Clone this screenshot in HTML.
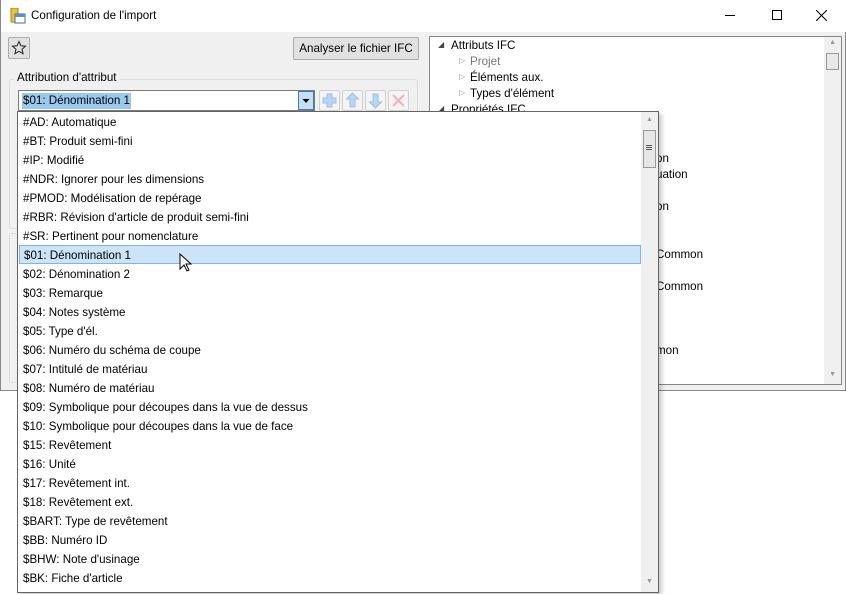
<!DOCTYPE html>
<html><head><meta charset="utf-8"><style>
*{margin:0;padding:0;box-sizing:border-box}
body{width:846px;height:594px;background:#fff;position:relative;overflow:hidden;font-family:"Segoe UI","Liberation Sans",sans-serif;font-size:11.6px;color:#000}
.win{position:absolute;left:0;top:0;width:846px;height:391px;background:#f0f0f0;border:1px solid #888;border-top:none}
.title{position:absolute;left:0;top:0;width:845px;height:32px;background:#fff}
.title span{position:absolute;left:30px;top:9px;font-size:11.6px}
.abs{position:absolute}
.btn{position:absolute;background:#e1e1e1;border:1px solid #adadad;border-radius:2px}
.tree{position:absolute;left:428px;top:36px;width:413px;height:349px;background:#fff;border:1px solid #828790}
.tree div{position:absolute;white-space:nowrap}
.list{position:absolute;left:17px;top:111px;width:642px;height:482px;background:#fff;border:1px solid #646464;box-shadow:3px 3px 4px rgba(0,0,0,.2)}
.list .r{position:absolute;left:1px;width:622px;height:19px;line-height:21px;padding-left:4px;white-space:nowrap}
.sel{background:#cce4f7;border:1px solid #7eb4ea;line-height:19px!important}
.sb{position:absolute;right:0;top:0;width:17px;height:480px;background:#f0f0f0}
</style></head><body>
<div class="win">
<div class="title">
<svg class="abs" style="left:9px;top:8px" width="16" height="16"><rect x="1" y="0" width="7" height="14" fill="#f2c12e" stroke="#b08010"/><rect x="5" y="6" width="10" height="9" fill="#fff" stroke="#3a6ea5"/><rect x="5" y="6" width="10" height="3" fill="#5b8fd0"/></svg>
<span>Configuration de l'import</span>
<div class="abs" style="left:724px;top:15px;width:10px;height:1px;background:#000"></div>
<div class="abs" style="left:771px;top:10px;width:10px;height:10px;border:1px solid #000"></div>
<svg class="abs" style="left:815px;top:10px" width="11" height="11"><path d="M0 0L11 11M11 0L0 11" stroke="#000"/></svg>
</div>
<div class="btn" style="left:7px;top:37px;width:22px;height:22px"><svg width="20" height="20"><path d="M10 3.5l1.9 4.3 4.6.4-3.5 3 1.1 4.5-4.1-2.4-4.1 2.4 1.1-4.5-3.5-3 4.6-.4z" fill="none" stroke="#222"/></svg></div>
<div class="btn" style="left:292px;top:37px;width:126px;height:23px;line-height:21px;text-align:center">Analyser le fichier IFC</div>
<div class="abs" style="left:8px;top:79px;width:409px;height:150px;border:1px solid #dcdcdc;border-radius:3px"></div>
<div class="abs" style="left:13px;top:71px;background:#f0f0f0;padding:0 3px">Attribution d'attribut</div>
<div class="abs" style="left:8px;top:233px;width:8px;height:150px;border:1px solid #dcdcdc;border-right:none;border-radius:3px"></div>
<div class="abs" style="left:17px;top:90px;width:297px;height:21px;background:#fff;border:1px solid #7a7a7a"></div>
<div class="abs" style="left:21px;top:93px;background:#99c9ef;line-height:16px;padding:0 1px">$01: Dénomination 1</div>
<div class="abs" style="left:297px;top:91px;width:16px;height:19px;background:#c4dff6;border:1px solid #3c7fb1"><svg width="14" height="17"><path d="M3.5 7h7l-3.5 4z" fill="#000"/></svg></div>
<div class="btn" style="left:318px;top:90px;width:21px;height:21px;background:#f4f4f4;border-color:#d0d0d0"><svg width="19" height="19"><path d="M7 3h5v4h4v5h-4v4H7v-4H3V7h4z" fill="#b8d6f2" stroke="#9cc0e6"/></svg></div>
<div class="btn" style="left:341px;top:90px;width:21px;height:21px;background:#f4f4f4;border-color:#d0d0d0"><svg width="19" height="19"><path d="M9.5 2l6 6h-3.5v8h-5v-8H3.5z" fill="#b8d6f2" stroke="#9cc0e6"/></svg></div>
<div class="btn" style="left:364px;top:90px;width:21px;height:21px;background:#f4f4f4;border-color:#d0d0d0"><svg width="19" height="19"><path d="M9.5 17l6-6h-3.5V3h-5v8H3.5z" fill="#b8d6f2" stroke="#9cc0e6"/></svg></div>
<div class="btn" style="left:387px;top:90px;width:21px;height:21px;background:#f4f4f4;border-color:#d0d0d0"><svg width="19" height="19"><path d="M4 4l11 11M15 4L4 15" stroke="#f3b2b2" stroke-width="2"/></svg></div>
<div class="tree">
<div style="left:8px;top:3px;font-size:8px;color:#444">◢</div><div style="left:21px;top:2px">Attributs IFC</div>
<div style="left:29px;top:19px;font-size:8px;color:#999">▷</div><div style="left:40px;top:18px;color:#777">Projet</div>
<div style="left:29px;top:35px;font-size:8px;color:#999">▷</div><div style="left:40px;top:34px">Éléments aux.</div>
<div style="left:29px;top:51px;font-size:8px;color:#999">▷</div><div style="left:40px;top:50px">Types d'élément</div>
<div style="left:8px;top:67px;font-size:8px;color:#444">◢</div><div style="left:21px;top:66px">Propriétés IFC</div>
<div style="left:226px;top:115px">on</div>
<div style="left:226px;top:131px">uation</div>
<div style="left:226px;top:163px">on</div>
<div style="left:226px;top:211px">Common</div>
<div style="left:226px;top:243px">Common</div>
<div style="left:226px;top:307px">mon</div>
<div style="right:0;top:0;width:17px;height:347px;background:#f0f0f0;position:absolute"></div>
<div style="right:2px;top:16px;width:13px;height:17px;background:#e8e8e8;border:1px solid #999"></div>
<div style="right:5px;top:2px;font-size:7px;color:#999">▲</div>
<div style="right:5px;top:334px;font-size:7px;color:#999">▼</div>
</div>
</div>
<div class="list">
<div class="r" style="top:0">#AD: Automatique</div>
<div class="r" style="top:19px">#BT: Produit semi-fini</div>
<div class="r" style="top:38px">#IP: Modifié</div>
<div class="r" style="top:57px">#NDR: Ignorer pour les dimensions</div>
<div class="r" style="top:76px">#PMOD: Modélisation de repérage</div>
<div class="r" style="top:95px">#RBR: Révision d'article de produit semi-fini</div>
<div class="r" style="top:114px">#SR: Pertinent pour nomenclature</div>
<div class="r sel" style="top:133px">$01: Dénomination 1</div>
<div class="r" style="top:152px">$02: Dénomination 2</div>
<div class="r" style="top:171px">$03: Remarque</div>
<div class="r" style="top:190px">$04: Notes système</div>
<div class="r" style="top:209px">$05: Type d'él.</div>
<div class="r" style="top:228px">$06: Numéro du schéma de coupe</div>
<div class="r" style="top:247px">$07: Intitulé de matériau</div>
<div class="r" style="top:266px">$08: Numéro de matériau</div>
<div class="r" style="top:285px">$09: Symbolique pour découpes dans la vue de dessus</div>
<div class="r" style="top:304px">$10: Symbolique pour découpes dans la vue de face</div>
<div class="r" style="top:323px">$15: Revêtement</div>
<div class="r" style="top:342px">$16: Unité</div>
<div class="r" style="top:361px">$17: Revêtement int.</div>
<div class="r" style="top:380px">$18: Revêtement ext.</div>
<div class="r" style="top:399px">$BART: Type de revêtement</div>
<div class="r" style="top:418px">$BB: Numéro ID</div>
<div class="r" style="top:437px">$BHW: Note d'usinage</div>
<div class="r" style="top:456px">$BK: Fiche d'article</div>
<div class="sb">
<div style="position:absolute;left:5px;top:4px;font-size:7px;color:#999">▲</div>
<div style="position:absolute;left:2px;top:18px;width:13px;height:38px;background:#e6e6e6;border:1px solid #999"></div>
<div style="position:absolute;left:5px;top:33px;width:6px;height:5px;border-top:1px solid #555;border-bottom:1px solid #555"></div>
<div style="position:absolute;left:5px;top:35px;width:6px;height:1px;background:#555"></div>
<div style="position:absolute;left:5px;top:466px;font-size:7px;color:#999">▼</div>
</div>
</div>
<svg class="abs" style="left:179px;top:253px" width="14" height="20"><path d="M1 1v15l4-4 3 6 2-1-3-6h5z" fill="#fff" stroke="#000"/></svg>
</body></html>
